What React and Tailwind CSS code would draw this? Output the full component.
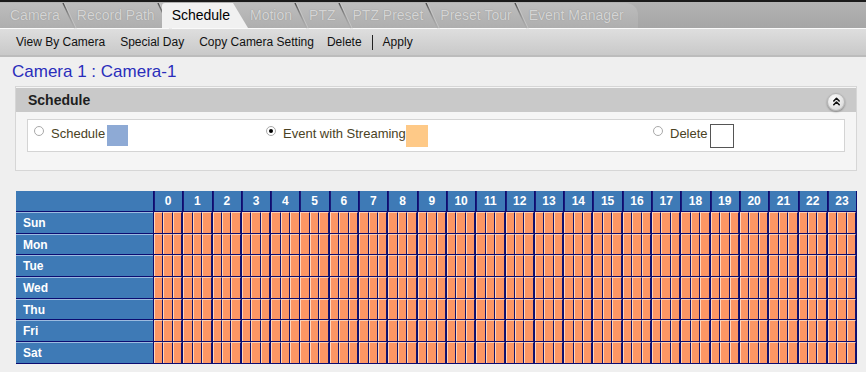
import { ChevronsUp } from "lucide-react";

const tabs = ["Camera", "Record Path", "Schedule", "Motion", "PTZ", "PTZ Preset", "Preset Tour", "Event Manager"];
const hours = Array.from({ length: 24 }, (_, i) => i);
const days = ["Sun", "Mon", "Tue", "Wed", "Thu", "Fri", "Sat"];

function Slant() {
  return (
    <svg width="17" height="26" viewBox="0 0 17 26" className="shrink-0">
      <defs>
        <linearGradient id="slantDark" x1="0" y1="0" x2="0" y2="1">
          <stop offset="0" stopColor="#4a4a4a" />
          <stop offset="1" stopColor="#a8a8a8" stopOpacity="0.2" />
        </linearGradient>
      </defs>
      <path d="M3 0 L15 26" stroke="url(#slantDark)" strokeWidth="1.4" fill="none" />
      <path d="M4.5 0 L16.5 26" stroke="#d8d8d8" strokeWidth="0.8" strokeOpacity="0.6" fill="none" />
    </svg>
  );
}

function Radio({ checked }) {
  return (
    <span className="mb-[9px] mr-[7px] flex h-[10px] w-[10px] shrink-0 items-center justify-center rounded-full border border-[#a9a9a9] bg-white">
      {checked && <span className="h-[4px] w-[4px] rounded-full bg-black" />}
    </span>
  );
}

export default function App() {
  return (
    <div
      className="h-[372px] w-[866px] overflow-hidden bg-[#efefef]"
      style={{ fontFamily: '"Liberation Sans", Arial, sans-serif' }}
    >
      {/* tab bar */}
      <div className="flex h-[28px] items-end border-t-2 border-[#1a1a1a] bg-gradient-to-b from-[#b3b3b3] to-[#a6a6a6]">
        <div className="flex h-[25px] items-center rounded-tr-[12px] bg-gradient-to-b from-[#bdbdbd] to-[#aeaeae] pl-[10px] pr-[14px]">
          {tabs.map((t) =>
            t === "Schedule" ? (
              <div
                key={t}
                className="-ml-[10px] flex h-[25px] items-center rounded-tl-[3px] bg-[#f1f1f1] pl-[10px] pr-[20px] text-[14px] text-black [clip-path:polygon(0_0,calc(100%-17px)_0,calc(100%-2px)_100%,0_100%)]"
              >
                {t}
              </div>
            ) : (
              <div key={t} className="flex h-[25px] items-center">
                <span className="text-[14px] text-[#d5d5d5] [text-shadow:0_0_1px_#8a8a8a]">{t}</span>
                {t !== "Event Manager" && <Slant />}
              </div>
            )
          )}
        </div>
      </div>

      {/* toolbar */}
      <div className="flex h-[29px] items-center gap-[15px] border-t-[1px] border-b-2 border-t-[#fafafa] border-b-[#bcbcbc] bg-gradient-to-b from-[#dedede] to-[#c9c9c9] pl-[16px] text-[12px] text-[#111]">
        <span>View By Camera</span>
        <span>Special Day</span>
        <span>Copy Camera Setting</span>
        <span className="-ml-[2px]">Delete</span>
        <span className="-mx-[5px] h-[15px] w-px bg-[#222]" />
        <span>Apply</span>
      </div>

      {/* title */}
      <div className="pl-[12px] pt-[5px] text-[17px] leading-[20px] text-[#2a2dbb]">Camera 1 : Camera-1</div>

      {/* schedule panel */}
      <div className="ml-[15px] mt-[4px] h-[85px] w-[842px] border border-[#d6d6d6] bg-[#f5f5f5] pt-px">
        <div className="flex h-[24px] items-center justify-between bg-[#c9c9c9] pl-[12px] pr-[11px]">
          <span className="text-[14px] font-bold text-[#1e1e1e]">Schedule</span>
          <span className="mt-[3px] flex h-[18px] w-[18px] items-center justify-center rounded-full border border-[#b5b5b5] bg-[radial-gradient(circle_at_40%_35%,#ffffff,#d0d0d0)] shadow-[0_1px_2px_rgba(0,0,0,0.35)]">
            <ChevronsUp size={13} strokeWidth={3} color="#111" />
          </span>
        </div>
        <div className="mx-[11px] mt-[7px] flex h-[33px] items-center border border-[#d4d4d4] bg-white pl-[6px] text-[13px] text-[#4a4224]">
          <div className="flex w-[232px] items-center">
            <Radio />
            <span className="mb-[4px]">Schedule</span>
            <span className="ml-[2px] h-[21px] w-[21px] bg-[#8eaad5]" />
          </div>
          <div className="flex w-[387px] items-center">
            <Radio checked />
            <span className="mb-[4px]">Event with Streaming</span>
            <span className="h-[22px] w-[22px] bg-[#fec987]" />
          </div>
          <div className="flex items-center">
            <Radio />
            <span className="mb-[4px]">Delete</span>
            <span className="ml-[2px] h-[24px] w-[24px] border border-[#555] bg-white" />
          </div>
        </div>
      </div>

      {/* grid */}
      <div className="ml-[16px] mt-[20px] w-[841px] border-r border-b border-[#0c0c70]">
        <div className="flex h-[20px] bg-[#3e7ab6]">
          <div className="w-[137px] shrink-0" />
          {hours.map((h) => (
            <div
              key={h}
              className="flex flex-1 items-center justify-center border-l border-[#0c0c70] text-[12px] font-bold text-white shadow-[inset_1px_0_0_#1a1a78]"
            >
              {h}
            </div>
          ))}
        </div>
        {days.map((d) => (
          <div key={d} className="flex h-[21.7px] border-t border-[#0c0c70]">
            <div className="flex w-[137px] shrink-0 items-center border-t border-[#9cbbe0] bg-[#3e7ab6] pl-[7px] text-[12px] font-bold text-white">
              {d}
            </div>
            {hours.map((h) => (
              <div key={h} className="flex flex-1 border-l border-[#0c0c70]">
                {[0, 1, 2].map((i) => (
                  <div
                    key={i}
                    className="flex-1 border-t border-l border-r border-t-[#fdd0b4] border-l-[#fdd6be] border-r-[#14146c] bg-[#fc9664]"
                  />
                ))}
              </div>
            ))}
          </div>
        ))}
      </div>
    </div>
  );
}
